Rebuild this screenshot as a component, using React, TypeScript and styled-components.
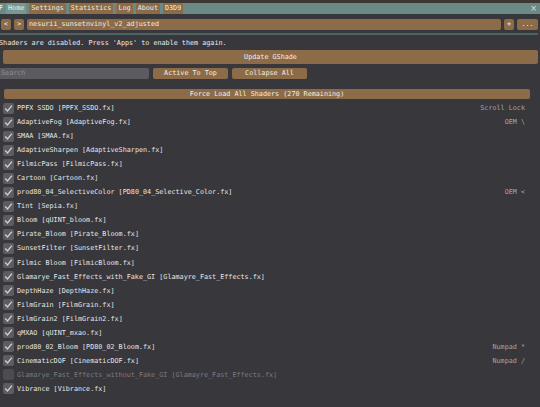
import React from 'react'
import styled, { createGlobalStyle } from 'styled-components'

const GlobalStyle = createGlobalStyle`
  html, body {
    margin: 0;
    padding: 0;
    background: #38373c;
  }
  body {
    font-family: "DejaVu Sans Mono", "Liberation Mono", monospace;
    font-size: 6.75px;
    color: #e8e8e8;
  }
`

type Shader = {
  name: string
  file: string
  key?: string
  off?: boolean
}

const shaders: Shader[] = [
  { name: 'PPFX SSDO', file: 'PPFX_SSDO.fx', key: 'Scroll Lock' },
  { name: 'AdaptiveFog', file: 'AdaptiveFog.fx', key: 'OEM \\' },
  { name: 'SMAA', file: 'SMAA.fx' },
  { name: 'AdaptiveSharpen', file: 'AdaptiveSharpen.fx' },
  { name: 'FilmicPass', file: 'FilmicPass.fx' },
  { name: 'Cartoon', file: 'Cartoon.fx' },
  { name: 'prod80_04_SelectiveColor', file: 'PD80_04_Selective_Color.fx', key: 'OEM <' },
  { name: 'Tint', file: 'Sepia.fx' },
  { name: 'Bloom', file: 'qUINT_bloom.fx' },
  { name: 'Pirate_Bloom', file: 'Pirate_Bloom.fx' },
  { name: 'SunsetFilter', file: 'SunsetFilter.fx' },
  { name: 'Filmic Bloom', file: 'FilmicBloom.fx' },
  { name: 'Glamarye_Fast_Effects_with_Fake_GI', file: 'Glamayre_Fast_Effects.fx' },
  { name: 'DepthHaze', file: 'DepthHaze.fx' },
  { name: 'FilmGrain', file: 'FilmGrain.fx' },
  { name: 'FilmGrain2', file: 'FilmGrain2.fx' },
  { name: 'qMXAO', file: 'qUINT_mxao.fx' },
  { name: 'prod80_02_Bloom', file: 'PD80_02_Bloom.fx', key: 'Numpad *' },
  { name: 'CinematicDOF', file: 'CinematicDOF.fx', key: 'Numpad /' },
  { name: 'Glamarye_Fast_Effects_without_Fake_GI', file: 'Glamayre_Fast_Effects.fx', off: true },
  { name: 'Vibrance', file: 'Vibrance.fx' },
]

const tabs = ['Settings', 'Statistics', 'Log', 'About', 'D3D9']

const Check = () => (
  <svg width="9" height="9" viewBox="0 0 9 9">
    <path d="M1.2 4.6 L3.5 7 L7.9 1.6" fill="none" stroke="#cfcfcf" strokeWidth="1.4" />
  </svg>
)

const App = () => {
  return (
    <>
      <GlobalStyle />
      <S.Page>
        <S.Backdrop />
        <S.TabBar>
          <S.Title>F</S.Title>
          <S.Tab active>Home</S.Tab>
          {tabs.map((t) => (
            <S.Tab key={t}>{t}</S.Tab>
          ))}
          <S.Close>×</S.Close>
        </S.TabBar>

        <S.PresetRow>
          <S.SmallBtn>&lt;</S.SmallBtn>
          <S.SmallBtn>&gt;</S.SmallBtn>
          <S.Combo>nesurii_sunsetnvinyl_v2_adjusted</S.Combo>
          <S.SmallBtn>+</S.SmallBtn>
          <S.SmallBtn wide>...</S.SmallBtn>
        </S.PresetRow>
        <S.Separator />

        <S.Notice>Shaders are disabled. Press 'Apps' to enable them again.</S.Notice>
        <S.UpdateBtn>Update GShade</S.UpdateBtn>

        <S.SearchRow>
          <S.Search>Search</S.Search>
          <S.ActionBtn>Active To Top</S.ActionBtn>
          <S.ActionBtn>Collapse All</S.ActionBtn>
        </S.SearchRow>

        <S.ForceBtn>Force Load All Shaders (270 Remaining)</S.ForceBtn>

        <S.List>
          {shaders.map((s, i) => (
            <S.Row key={i} off={s.off}>
              <S.Box off={s.off}>{!s.off && <Check />}</S.Box>
              <S.Label>
                {s.name} [{s.file}]
              </S.Label>
              {s.key && <S.Key>{s.key}</S.Key>}
            </S.Row>
          ))}
        </S.List>
      </S.Page>
    </>
  )
}

const S = {
  Page: styled.div`
    width: 540px;
    height: 407px;
    overflow: hidden;
    background: #38373c;
    display: flex;
    flex-direction: column;
  `,
  Backdrop: styled.div`
    height: 3px;
    background: #3d3834;
  `,
  TabBar: styled.div`
    height: 11px;
    background: #6b8a85;
    display: flex;
    align-items: stretch;
    gap: 3px;
    position: relative;
    line-height: 11px;
  `,
  Title: styled.div`
    width: 4px;
    color: #f2f2f2;
    margin-left: -1px;
    overflow: hidden;
  `,
  Tab: styled.div<{ active?: boolean }>`
    padding: 0 2px;
    background: ${({ active }) => (active ? '#779792' : '#8c6b48')};
    border-radius: 2px 2px 0 0;
    color: #f0ece6;
    &:first-of-type {
      padding: 0 4px;
    }
  `,
  Close: styled.div`
    position: absolute;
    right: 3px;
    top: 0;
    color: #d8e0de;
    font-size: 8px;
    font-family: "DejaVu Sans", sans-serif;
  `,
  PresetRow: styled.div`
    display: flex;
    align-items: center;
    gap: 3px;
    padding: 5px 2px 0 1px;
    height: 11px;
    line-height: 11px;
  `,
  SmallBtn: styled.div<{ wide?: boolean }>`
    width: ${({ wide }) => (wide ? '21px' : '10px')};
    height: 11px;
    background: #8c6b48;
    border-radius: 2px;
    text-align: center;
    color: #f0ece6;
  `,
  Combo: styled.div`
    flex: 1;
    height: 11px;
    background: #8c6b48;
    border-radius: 2px;
    padding-left: 2px;
    color: #f0ece6;
  `,
  Separator: styled.div`
    margin: 3px 2px 0 0;
    height: 2px;
    background: #4d6464;
  `,
  Notice: styled.div`
    margin: 3px 0 0 -1px;
    height: 11px;
    line-height: 11px;
    color: #ececec;
  `,
  UpdateBtn: styled.div`
    margin: 1px 2px 0 3px;
    height: 14px;
    line-height: 14px;
    background: #8c6b48;
    border-radius: 2px;
    text-align: center;
    color: #f2eee8;
  `,
  SearchRow: styled.div`
    display: flex;
    align-items: center;
    margin-top: 4px;
    height: 11px;
    line-height: 11px;
  `,
  Search: styled.div`
    width: 149px;
    height: 11px;
    background: #5b5b61;
    border-radius: 0 2px 2px 0;
    color: #8f8f96;
    padding-left: 1px;
    box-sizing: border-box;
  `,
  ActionBtn: styled.div`
    width: 75px;
    height: 11px;
    margin-left: 4px;
    background: #8c6b48;
    border-radius: 2px;
    text-align: center;
    color: #f2eee8;
  `,
  ForceBtn: styled.div`
    margin: 10px 10px 0 4px;
    height: 10px;
    line-height: 10px;
    background: #8c6b48;
    border-radius: 2px;
    text-align: center;
    color: #f2eee8;
  `,
  List: styled.div`
    display: flex;
    flex-direction: column;
    margin-top: 2px;
    padding: 0 15px 0 3px;
  `,
  Row: styled.div<{ off?: boolean }>`
    display: flex;
    align-items: center;
    height: 14.05px;
    color: ${({ off }) => (off ? '#7c7b80' : '#e6e6e6')};
  `,
  Box: styled.div<{ off?: boolean }>`
    width: 11px;
    height: 11px;
    border-radius: 2px;
    background: ${({ off }) => (off ? '#4d4c52' : '#5c5c62')};
    display: flex;
    align-items: center;
    justify-content: center;
    margin-right: 3px;
  `,
  Label: styled.div`
    flex: 1;
    white-space: nowrap;
  `,
  Key: styled.div`
    color: #a4a4a8;
    white-space: nowrap;
  `,
}

export default App
